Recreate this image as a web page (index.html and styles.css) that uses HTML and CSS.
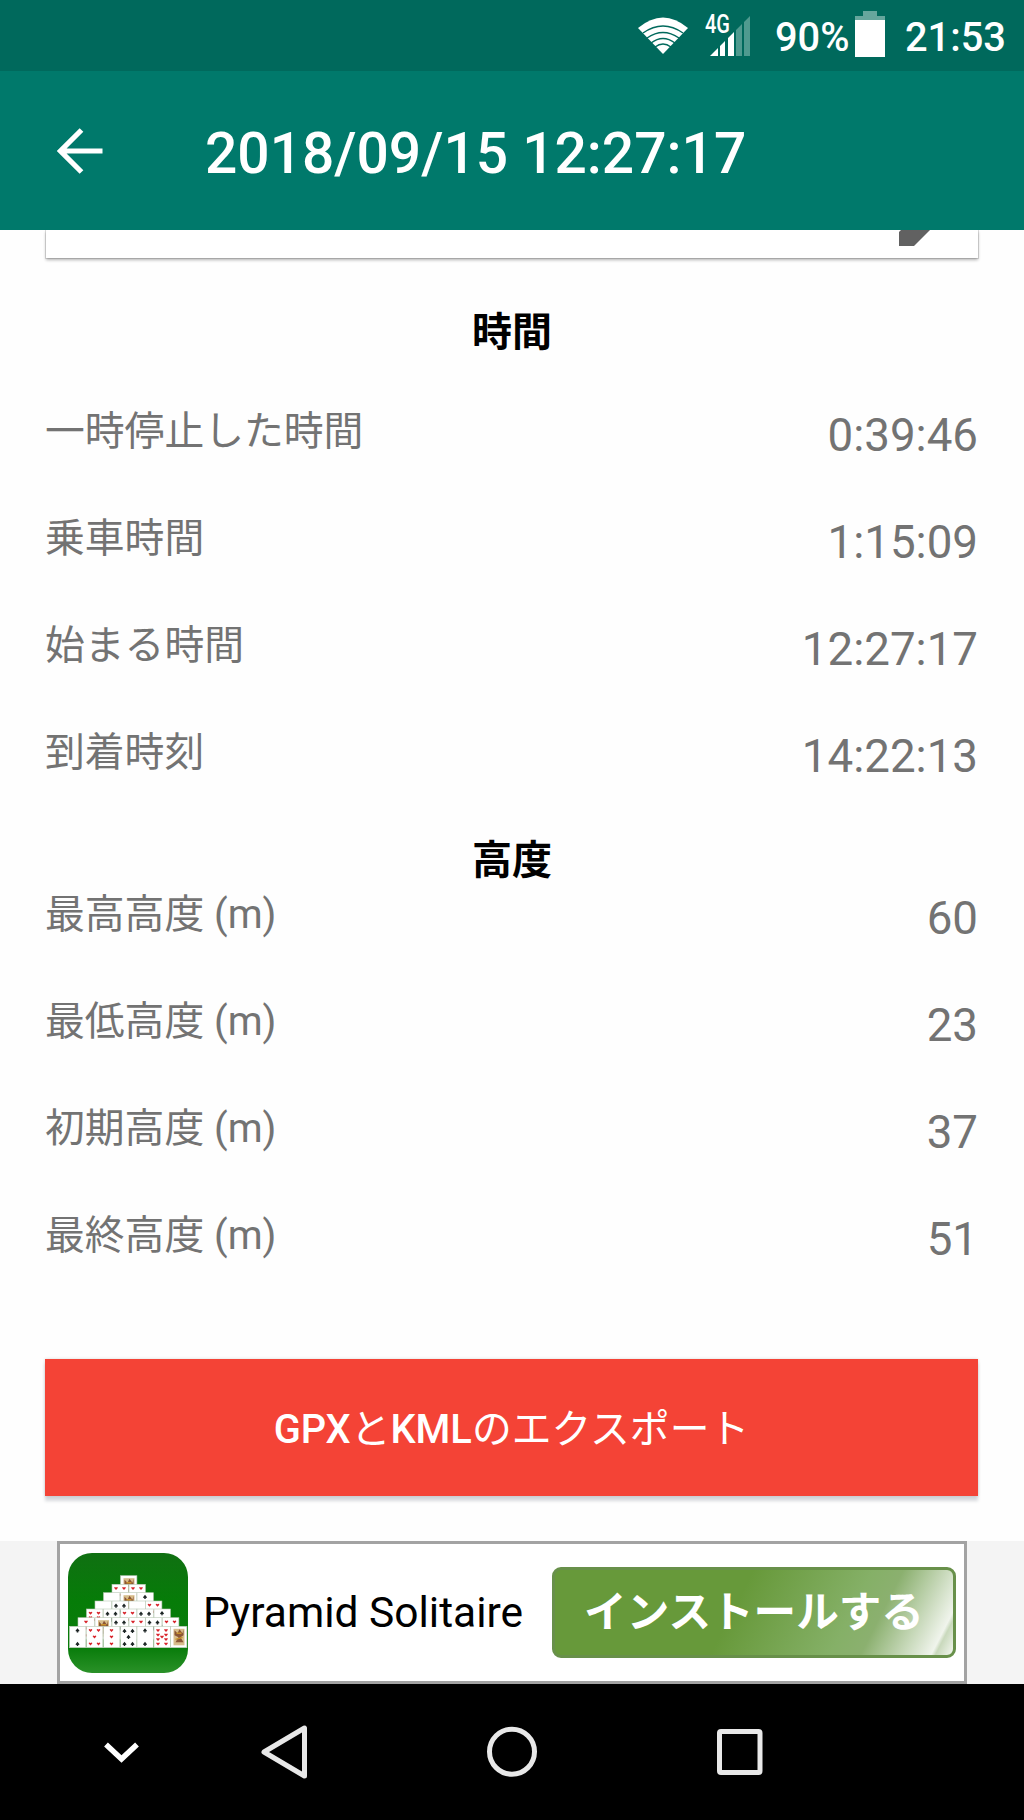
FILE: index.html
```
<!DOCTYPE html>
<html lang="ja">
<head>
  <meta charset="UTF-8">
  <title>2018/09/15 12:27:17</title>
  <link rel="stylesheet" href="styles.css">
</head>
<body>
  <div class="status-bar">
    <svg class="wifi" width="50" height="37" viewBox="0 0 50 37">
      <path d="M0 11 Q25 -10 50 11 L25 37 Z" fill="#fff"/>
      <g fill="none" stroke="#00695c" stroke-width="1.5">
        <path d="M5 16 Q25 2 45 16"/>
        <path d="M9 21 Q25 10 41 21"/>
        <path d="M13 26 Q25 17 37 26"/>
        <path d="M17 30 Q25 24 33 30"/>
      </g>
    </svg>
    <div class="signal">
      <span class="network">4G</span>
      <svg width="41" height="40" viewBox="0 0 41 40">
        <path d="M0 40 L8 32 V40 Z M10 30 L15 25 V40 H10 Z M18 22 L24 16 V40 H18 Z" fill="#fff"/>
        <path d="M26 14 L32 8 V40 H26 Z M34 6 L40 0 V40 H34 Z" fill="#4f9a8f"/>
      </svg>
    </div>
    <span class="percent">90%</span>
    <svg class="battery" width="30" height="46" viewBox="0 0 30 46">
      <path d="M8 0 H22 V5 H30 V10 H0 V5 H8 Z" fill="#66a69d"/>
      <rect y="9" width="30" height="37" fill="#fff"/>
    </svg>
    <span class="clock">21:53</span>
  </div>

  <div class="app-bar">
    <svg class="back" width="46" height="46" viewBox="0 0 46 46">
      <path d="M24.5 2 L3.5 23 L24.5 44 M3.5 23 H45.5" fill="none" stroke="#fff" stroke-width="5.2"/>
    </svg>
    <h1>2018/09/15 12:27:17</h1>
  </div>

  <div class="content">
    <div class="card">
      <svg class="pencil" width="31" height="16" viewBox="0 0 31 16">
        <path d="M0 2 L2 0 H31 L15 16 H0 Z" fill="#616161"/>
      </svg>
    </div>

    <h2>時間</h2>
    <ul>
      <li><span class="label">一時停止した時間</span><span class="value">0:39:46</span></li>
      <li><span class="label">乗車時間</span><span class="value">1:15:09</span></li>
      <li><span class="label">始まる時間</span><span class="value">12:27:17</span></li>
      <li><span class="label">到着時刻</span><span class="value">14:22:13</span></li>
    </ul>

    <h2 class="altitude">高度</h2>
    <ul>
      <li><span class="label">最高高度 (m)</span><span class="value">60</span></li>
      <li><span class="label">最低高度 (m)</span><span class="value">23</span></li>
      <li><span class="label">初期高度 (m)</span><span class="value">37</span></li>
      <li><span class="label">最終高度 (m)</span><span class="value">51</span></li>
    </ul>

    <button class="export"><b>GPX</b>と<b>KML</b>のエクスポート</button>
  </div>

  <div class="ad">
    <div class="ad-box">
      <svg class="ad-icon" width="120" height="120" viewBox="0 0 120 120">
        <defs>
          <linearGradient id="felt" x1="0" y1="0" x2="0" y2="1">
            <stop offset="0" stop-color="#107012"/>
            <stop offset=".4" stop-color="#067c08"/>
            <stop offset=".8" stop-color="#0a7d0c"/>
            <stop offset="1" stop-color="#2a9128"/>
          </linearGradient>
          <g id="blank">
            <rect width="16.4" height="21.4" fill="#fff" stroke="#b9c9b5" stroke-width=".6"/>
          </g>
          <path id="heart" d="M0 1.8 L-1.8 -.3 Q-1.6 -2 0 -.8 Q1.6 -2 1.8 -.3 Z" fill="#d8252c"/>
          <path id="spade" d="M0 -2 L2 .5 Q1.6 1.8 .4 1 L.9 2.2 H-.9 L-.4 1 Q-1.6 1.8 -2 .5 Z" fill="#1c2424"/>
          <g id="red">
            <use href="#blank"/>
            <use href="#heart" x="4" y="4"/><use href="#heart" x="12" y="4"/>
            <use href="#heart" x="8" y="10.5"/>
            <use href="#heart" x="4" y="17.5"/><use href="#heart" x="12" y="17.5"/>
          </g>
          <g id="red3">
            <use href="#blank"/>
            <use href="#heart" x="8" y="4"/><use href="#heart" x="8" y="10.5"/><use href="#heart" x="8" y="17.5"/>
          </g>
          <g id="red8">
            <use href="#red"/>
            <use href="#heart" x="4" y="8.5"/><use href="#heart" x="12" y="8.5"/>
            <use href="#heart" x="4" y="13"/><use href="#heart" x="12" y="13"/>
          </g>
          <g id="black">
            <use href="#blank"/>
            <use href="#spade" x="4" y="4.5"/><use href="#spade" x="12" y="4.5"/>
            <use href="#spade" x="8" y="10.5"/>
            <use href="#spade" x="4" y="17.5"/><use href="#spade" x="12" y="17.5"/>
          </g>
          <g id="black2">
            <use href="#blank"/>
            <use href="#spade" x="8" y="4"/><use href="#spade" x="8" y="17.5"/>
          </g>
          <g id="king">
            <use href="#blank"/>
            <rect x="3" y="2.5" width="11" height="16.5" fill="#d8bd8b"/>
            <path d="M4 4 L7 7 L9 3 L12 7 L13 3 V9 L10 11 L13 16 H5 L8 11 L4 9 Z" fill="#8b5636"/>
            <path d="M6 7 H11 M5 13 L12 11" stroke="#c8922c" stroke-width="1.4"/>
          </g>
        </defs>
        <rect width="120" height="120" rx="24" fill="url(#felt)"/>
        <!-- pyramid, top row first -->
        <use href="#king" x="52.5" y="22.7"/>
        <use href="#red" x="44" y="31.3"/><use href="#red" x="61" y="31.3"/>
        <use href="#blank" x="35.5" y="39.7"/><use href="#king" x="52.5" y="39.7"/><use href="#black2" x="69" y="39.7"/>
        <use href="#blank" x="27" y="48"/><use href="#black" x="44" y="48"/><use href="#blank" x="61" y="48"/><use href="#red" x="77.5" y="48"/>
        <use href="#red8" x="18.5" y="56"/><use href="#black" x="35.5" y="56"/><use href="#red" x="52.5" y="56"/><use href="#black" x="69" y="56"/><use href="#black2" x="86" y="56"/>
        <use href="#red3" x="10" y="64.7"/><use href="#king" x="27" y="64.7"/><use href="#black" x="44" y="64.7"/><use href="#red" x="61" y="64.7"/><use href="#black" x="77.5" y="64.7"/><use href="#red" x="94.5" y="64.7"/>
        <use href="#black2" x="1.5" y="73.3"/><use href="#red" x="18.5" y="73.3"/><use href="#red3" x="35.5" y="73.3"/><use href="#black" x="52.5" y="73.3"/><use href="#black2" x="69" y="73.3"/><use href="#red8" x="86" y="73.3"/><use href="#king" x="102.5" y="73.3"/>
      </svg>
      <span class="ad-title">Pyramid Solitaire</span>
      <button class="install">インストールする</button>
    </div>
  </div>

  <div class="nav-bar">
    <svg width="1024" height="136" viewBox="0 0 1024 136" fill="none" stroke="#e8e8e8" stroke-width="5">
      <path d="M106 60.5 L121.5 75 L137 60.5" stroke="#fff" stroke-width="5.5"/>
      <path d="M304.5 44 V92 L264 68 Z" stroke-linejoin="round"/>
      <circle cx="512" cy="67.7" r="22.5"/>
      <rect x="719.5" y="47.5" width="40.5" height="41" rx="1.5"/>
    </svg>
  </div>
</body>
</html>
```

FILE: styles.css
```
* {
  box-sizing: border-box;
}

body {
  margin: 0;
  width: 1024px;
  height: 1820px;
  display: flex;
  flex-direction: column;
  overflow: hidden;
  background: #fefefe;
  font-family: Roboto, "Noto Sans CJK JP", sans-serif;
}

.status-bar {
  height: 71px;
  padding: 0 0 0 638px;
  display: flex;
  align-items: flex-start;
  background: #00695c;
  color: #fff;
  font-size: 39.8px;
  font-weight: 500;
  line-height: 46px;
}

.wifi {
  margin-top: 17px;
}

.signal {
  position: relative;
  width: 41px;
  margin: 16px 0 0 22px;
}

.signal svg {
  display: block;
}

.network {
  position: absolute;
  left: -5px;
  top: -3px;
  font-size: 25px;
  line-height: 24px;
  transform: scaleX(0.8);
  transform-origin: left;
}

.percent {
  margin: 15px 0 0 24px;
  width: 80px;
}

.battery {
  margin-top: 11px;
}

.clock {
  margin: 15px 0 0 20px;
}

.app-bar {
  height: 159px;
  padding-left: 57px;
  display: flex;
  align-items: center;
  background: #00796b;
  color: #fff;
}

.app-bar h1 {
  margin: 6px 0 0 102px;
  font-size: 56.9px;
  font-weight: 500;
  line-height: 66px;
}

.content {
  height: 1311px;
  padding: 0 46px;
}

.card {
  height: 28px;
  padding-right: 48px;
  display: flex;
  justify-content: flex-end;
  background: #fff;
  box-shadow: 0 2px 3px rgba(0,0,0,0.3), 0 0 0 1px rgba(0,0,0,0.12);
  clip-path: inset(0 -6px -8px -6px);
}

h2 {
  margin: 45px 0 43px;
  height: 60px;
  text-align: center;
  color: #000;
  font-size: 40px;
  font-weight: 700;
  line-height: 60px;
}

h2.altitude {
  margin: 0;
  height: 55px;
  line-height: 54px;
}

ul {
  margin: 0;
  padding: 0;
  list-style: none;
}

li {
  height: 107px;
  display: flex;
  justify-content: space-between;
  color: #737373;
}

.label {
  margin-left: -1px;
  font-size: 39.8px;
  line-height: 52px;
}

.value {
  font-size: 45.7px;
  line-height: 60px;
}

.export {
  display: block;
  width: 933px;
  height: 137px;
  margin: 42px 0 0 -1px;
  padding: 0 0 4px;
  border: none;
  background: #f44336;
  color: #fff;
  font-family: inherit;
  font-size: 39.8px;
  font-weight: 400;
  box-shadow: 0 5px 3px rgba(60,70,90,0.2), 0 0 3px rgba(0,0,0,0.15);
}

.export b {
  font-weight: 500;
}

.ad {
  height: 143px;
  padding: 0 57px;
  background: #f4f4f4;
}

.ad-box {
  width: 910px;
  height: 143px;
  padding-left: 8px;
  display: flex;
  align-items: center;
  border: 3px solid #a3a3a3;
  background: #fff;
}

.ad-title {
  width: 349px;
  margin-left: 15px;
  font-size: 42.5px;
  color: #000;
  white-space: nowrap;
}

.install {
  width: 404px;
  height: 91px;
  padding: 0 0 8px;
  border: 3px solid #68904a;
  border-radius: 9px;
  background: linear-gradient(117deg, #67993a 45%, #85b067 72%, #8bb06f 79%, #f0f4ec 95%, #c9d9bc 96%, #f4f7f1 100%);
  color: #fff;
  font-family: inherit;
  font-size: 42.6px;
  font-weight: 700;
}

.nav-bar {
  height: 136px;
  background: #000;
}
```
